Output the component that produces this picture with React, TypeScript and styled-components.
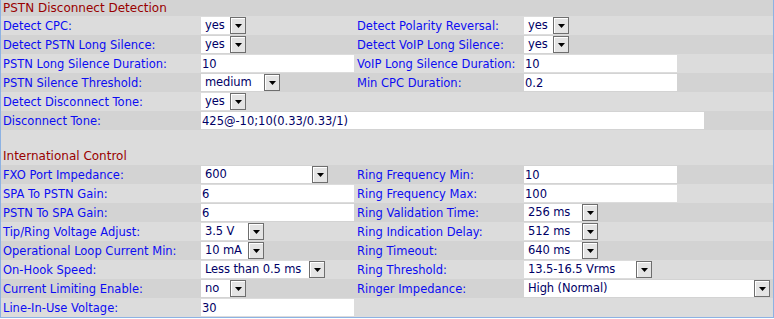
import styled, { createGlobalStyle } from 'styled-components';

const GlobalStyle = createGlobalStyle`
  body {
    margin: 0;
    background: #ffffff;
  }
`;

type Field =
  | { kind: 'select'; value: string; width: number }
  | { kind: 'input'; value: string; width: number };

type Pair = { label: string; field: Field };

type Row = { left: Pair; right?: Pair; wide?: boolean };

const sel = (value: string, width: number): Field => ({ kind: 'select', value, width });
const inp = (value: string, width = 153): Field => ({ kind: 'input', value, width });

const pstnRows: Row[] = [
  { left: { label: 'Detect CPC:', field: sel('yes', 45) }, right: { label: 'Detect Polarity Reversal:', field: sel('yes', 45) } },
  { left: { label: 'Detect PSTN Long Silence:', field: sel('yes', 45) }, right: { label: 'Detect VoIP Long Silence:', field: sel('yes', 45) } },
  { left: { label: 'PSTN Long Silence Duration:', field: inp('10') }, right: { label: 'VoIP Long Silence Duration:', field: inp('10') } },
  { left: { label: 'PSTN Silence Threshold:', field: sel('medium', 79) }, right: { label: 'Min CPC Duration:', field: inp('0.2') } },
  { left: { label: 'Detect Disconnect Tone:', field: sel('yes', 45) } },
  { left: { label: 'Disconnect Tone:', field: inp('425@-10;10(0.33/0.33/1)', 503) }, wide: true },
];

const intlRows: Row[] = [
  { left: { label: 'FXO Port Impedance:', field: sel('600', 127) }, right: { label: 'Ring Frequency Min:', field: inp('10') } },
  { left: { label: 'SPA To PSTN Gain:', field: inp('6') }, right: { label: 'Ring Frequency Max:', field: inp('100') } },
  { left: { label: 'PSTN To SPA Gain:', field: inp('6') }, right: { label: 'Ring Validation Time:', field: sel('256 ms', 74) } },
  { left: { label: 'Tip/Ring Voltage Adjust:', field: sel('3.5 V', 63) }, right: { label: 'Ring Indication Delay:', field: sel('512 ms', 74) } },
  { left: { label: 'Operational Loop Current Min:', field: sel('10 mA', 63) }, right: { label: 'Ring Timeout:', field: sel('640 ms', 74) } },
  { left: { label: 'On-Hook Speed:', field: sel('Less than 0.5 ms', 124) }, right: { label: 'Ring Threshold:', field: sel('13.5-16.5 Vrms', 128) } },
  { left: { label: 'Current Limiting Enable:', field: sel('no', 45) }, right: { label: 'Ringer Impedance:', field: sel('High (Normal)', 246) } },
  { left: { label: 'Line-In-Use Voltage:', field: inp('30') } },
];

const Arrow = () => (
  <svg width="7" height="4" viewBox="0 0 7 4">
    <polygon points="0,0 7,0 3.5,4" fill="#000" />
  </svg>
);

const FieldView = ({ field }: { field: Field }) => {
  if (field.kind === 'input') {
    return <TextInput defaultValue={field.value} $width={field.width} />;
  }
  return (
    <SelectBox $width={field.width}>
      <SelectText>{field.value}</SelectText>
      <DropButton>
        <Arrow />
      </DropButton>
    </SelectBox>
  );
};

const renderRows = (rows: Row[], startDark: boolean) =>
  rows.map((row, i) => (
    <FormRow key={row.left.label} $dark={(i % 2 === 0) === startDark}>
      <Label>{row.left.label}</Label>
      <Cell $span={row.wide ? 3 : 1}>
        <FieldView field={row.left.field} />
      </Cell>
      {!row.wide && (
        <>
          <Label $right>{row.right ? row.right.label : ''}</Label>
          <Cell>{row.right && <FieldView field={row.right.field} />}</Cell>
        </>
      )}
    </FormRow>
  ));

const App = () => {
  return (
    <>
      <GlobalStyle />
      <Panel>
        <SectionTitle $dark $height={16}>PSTN Disconnect Detection</SectionTitle>
        {renderRows(pstnRows, false)}
        <Spacer />
        <SectionTitle $height={17}>International Control</SectionTitle>
        {renderRows(intlRows, true)}
      </Panel>
    </>
  );
};

const Panel = styled.div`
  width: 772px;
  border: 1px solid #8db2e3;
  border-top: none;
  background: #dcdcdc;
  font-family: 'DejaVu Sans', Verdana, sans-serif;
  font-size: 11.5px;
`;

const SectionTitle = styled.div<{ $dark?: boolean; $height: number }>`
  height: ${(p) => p.$height}px;
  line-height: ${(p) => p.$height}px;
  padding-left: 2px;
  color: #990000;
  font-size: 12px;
  background: ${(p) => (p.$dark ? '#d3d3d3' : '#dcdcdc')};
`;

const Spacer = styled.div`
  height: 18px;
`;

const FormRow = styled.div<{ $dark: boolean }>`
  display: grid;
  grid-template-columns: 200px 155px 168px 1fr;
  align-items: center;
  height: 19px;
  background: ${(p) => (p.$dark ? '#d3d3d3' : '#dcdcdc')};
`;

const Label = styled.div<{ $right?: boolean }>`
  padding-left: ${(p) => (p.$right ? 1 : 2)}px;
  color: #0c0cf2;
  white-space: nowrap;
`;

const Cell = styled.div<{ $span?: number }>`
  grid-column: span ${(p) => p.$span || 1};
  display: flex;
  align-items: center;
`;

const TextInput = styled.input<{ $width: number }>`
  box-sizing: border-box;
  width: ${(p) => p.$width}px;
  height: 17px;
  margin: 0;
  padding: 0 0 0 1px;
  border: none;
  outline: none;
  background: #ffffff;
  color: #000066;
  font: inherit;
`;

const SelectBox = styled.div<{ $width: number }>`
  box-sizing: border-box;
  display: flex;
  align-items: flex-start;
  width: ${(p) => p.$width}px;
  height: 17px;
  background: #ffffff;
`;

const SelectText = styled.span`
  flex: 1;
  min-width: 0;
  overflow: hidden;
  padding-left: 4px;
  line-height: 17px;
  color: #000066;
  white-space: nowrap;
  letter-spacing: -0.1px;
`;

const DropButton = styled.span`
  box-sizing: border-box;
  flex: none;
  display: flex;
  align-items: center;
  justify-content: center;
  width: 16px;
  height: 17px;
  border: 1px solid #6e6e6e;
  background: #e4e4e4;
  box-shadow: inset 1px 1px 0 #ffffff;
  svg {
    margin-top: 1px;
  }
`;

export default App;
